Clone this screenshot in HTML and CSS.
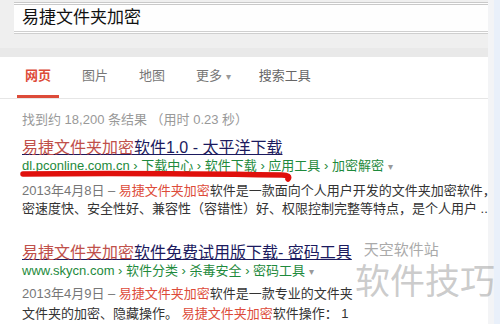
FILE: index.html
```html
<!DOCTYPE html>
<html lang="zh-CN">
<head>
  <meta charset="UTF-8" />
  <title>易捷文件夹加密 - 搜索</title>
  <link rel="stylesheet" href="styles.css">
</head>
<body>
  <div class="page">
    <div class="main">

      <!-- search box -->
      <div class="header">
        <div class="searchbox">易捷文件夹加密</div>
      </div>

      <!-- tabs -->
      <div class="tabs">
        <span class="tab active">网页</span>
        <span class="tab">图片</span>
        <span class="tab">地图</span>
        <span class="tab">更多 <span class="caret">▾</span></span>
        <span class="tab tools">搜索工具</span>
      </div>

      <div class="results">
        <div class="stats">找到约 18,200 条结果 （用时 0.23 秒）</div>

        <div class="result first">
          <div class="title"><a><em>易捷文件夹加密</em>软件1.0 - 太平洋下载</a></div>
          <div class="url">dl.pconline.com.cn › 下载中心 › 软件下载 › 应用工具 › 加密解密 <span class="caret">▾</span></div>
          <div class="snippet">
            <div class="line"><span class="date">2013年4月8日 – </span><em>易捷文件夹加密</em>软件是一款面向个人用户开发的文件夹加密软件，</div>
            <div class="line">密速度快、安全性好、兼容性（容错性）好、权限控制完整等特点，是个人用户 ...</div>
          </div>
          <!-- hand-drawn red mark over the url -->
          <svg class="mark" width="280" height="14" viewBox="0 0 280 14">
            <path d="M4 5 C 80 4, 200 5, 263 6 C 269 6, 271 8, 269 10" fill="none" stroke="#e0100c" stroke-width="5.5" stroke-linecap="round"/>
          </svg>
        </div>

        <div class="result second">
          <div class="title"><a><em>易捷文件夹加密</em>软件免费试用版下载- 密码工具</a><span class="site">天空软件站</span></div>
          <div class="url">www.skycn.com › 软件分类 › 杀毒安全 › 密码工具 <span class="caret">▾</span></div>
          <div class="snippet">
            <div class="line"><span class="date">2013年4月9日 – </span><em>易捷文件夹加密</em>软件是一款专业的文件夹</div>
            <div class="line">文件夹的加密、隐藏操作。 <em>易捷文件夹加密</em>软件操作： 1</div>
          </div>
        </div>
      </div>
    </div>
    <div class="edge"></div>
    <div class="watermark">软件技巧</div>
  </div>
</body>
</html>
```

FILE: styles.css
```css
html, body {
  margin: 0; padding: 0;
  height: 100%;
  overflow: hidden;
  font-family: 'Liberation Sans', 'Noto Sans CJK SC', sans-serif;
  background: #e9f0fa;
  color: #222;
}

.page {
  display: flex;
  height: 324px;
  position: relative;
}

.main {
  width: 488px;
  background: #fff;
  overflow: hidden;
}

/* light strip on the right side of the window */
.edge {
  width: 6px;
  background: #f3f4f6;
}

/* Search box area */
.header {
  background: #efefef;
  padding: 2px 0 0 14px;
  height: 46px;
  border-bottom: 9px solid #e9e9e9;
}

.searchbox {
  height: 26px;
  background: #fefefe;
  border-top: 3px double #c9c9c9;
  border-bottom: 3px double #cfcfcf;
  padding-left: 8px;
  font-size: 17px;
  line-height: 26px;
  color: #111;
}

/* Tabs */
.tabs {
  display: flex;
  gap: 15px;
  padding-left: 17px;
  border-bottom: 1px solid #e6e6e6;
}

.tab {
  padding: 11px 8px 10px;
  border-bottom: 3px solid transparent;
  font-size: 13px;
  line-height: 16px;
  color: #777;
}

.tab.active {
  color: #dd4b39;
  font-weight: bold;
  border-bottom-color: #dd4b39;
}

.tab.tools {
  margin-left: -3px;
  color: #666;
}

.caret {
  font-size: 10px;
  color: #999;
}

/* Results */
.results {
  padding: 13px 0 0 22px;
}

.stats {
  font-size: 13px;
  color: #999;
  line-height: 16px;
}

.result {
  position: relative;
}

.result.first {
  margin-top: 11px;
}

.result.second {
  margin-top: 26px;
}

.title {
  font-size: 16px;
  line-height: 18px;
  white-space: nowrap;
}

.title a {
  color: #1b1a5e;
  text-decoration: underline;
}

.title em {
  font-style: normal;
  color: #c0504a;
}

.site {
  position: relative;
  top: -3px;
  font-size: 15px;
  color: #aaa;
  margin-left: 12px;
}

.url {
  font-size: 13px;
  line-height: 17px;
  color: #1e8a3c;
  white-space: nowrap;
}

.snippet {
  margin-top: 7px;
  font-size: 13px;
  line-height: 18px;
  color: #333;
}

.result.second .snippet {
  margin-top: 4px;
  line-height: 20px;
}

.line {
  white-space: nowrap;
}

.snippet em {
  font-style: normal;
  color: #dd4b39;
}

.date {
  color: #777;
}

.mark {
  position: absolute;
  left: -3px;
  top: 30px;
}

.watermark {
  position: absolute;
  left: 355px;
  top: 260px;
  font-size: 35px;
  line-height: 44px;
  color: rgba(160, 160, 160, 0.55);
  white-space: nowrap;
}
```
